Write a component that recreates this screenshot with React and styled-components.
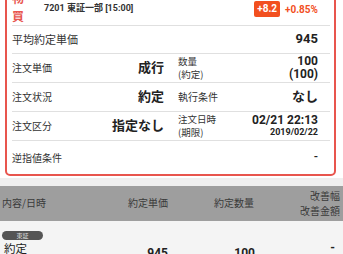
import React from 'react';
import styled, { createGlobalStyle } from 'styled-components';

const GlobalStyle = createGlobalStyle`
    html, body {
        margin: 0;
        padding: 0;
        background: #fff;
        overflow: hidden;
    }
    body {
        font-family: Roboto, "Noto Sans CJK JP", sans-serif;
        color: #333;
    }
`;

const Page = styled.div`
    width: 343px;
    height: 254px;
    overflow: hidden;
    background: #f4f4f4;
`;

const CardArea = styled.div`
    background: #fff;
    padding: 0 7px 2px 5px;
    margin-top: -14px;
`;

const Card = styled.div`
    border: 2px solid #e8554e;
    border-radius: 5px;
    padding: 0 4px 0 5px;
    background: #fff;
`;

const Head = styled.div`
    display: flex;
    align-items: flex-start;
    height: 37px;
    border-bottom: 1px solid #e0e0e0;
`;

const Side = styled.div`
    color: #e8554e;
    font-size: 12px;
    font-weight: 700;
    line-height: 18px;
    width: 32px;
    padding-top: 1px;
    font-family: "Noto Sans CJK JP", sans-serif;
`;

const Code = styled.div`
    font-size: 9px;
    font-weight: 700;
    padding-top: 13px;
    color: #333;
    flex: 1;
`;

const Change = styled.div`
    display: flex;
    align-items: center;
    gap: 5px;
    padding-top: 13px;
    margin-right: 12px;
`;

const Badge = styled.span`
    background: #f2501f;
    color: #fff;
    font-weight: 700;
    font-size: 10px;
    border-radius: 2px;
    padding: 2px 3px;
    line-height: 12px;
`;

const Pct = styled.span`
    color: #f2501f;
    font-weight: 700;
    font-size: 10px;
`;

const Row = styled.div`
    display: flex;
    align-items: center;
    height: ${p => p.$h}px;
    border-bottom: ${p => (p.$last ? 'none' : '1px solid #e0e0e0')};
`;

const Half = styled.div`
    display: flex;
    align-items: center;
    flex: ${p => (p.$left ? '0 0 159px' : '1')};
    padding-left: ${p => (p.$left ? 0 : 7)}px;
    height: 100%;
`;

const Label = styled.div`
    font-size: ${p => p.$size || 10}px;
    line-height: 1.35;
    color: #333;
    flex: 1;
    font-family: "Noto Sans CJK JP", sans-serif;
`;

const Value = styled.div`
    font-size: ${p => p.$size || 13}px;
    font-weight: 700;
    text-align: right;
    line-height: 1.1;
    color: #222;
    margin-right: ${p => p.$mr || 0}px;
`;

const Sub = styled.div`
    font-size: 9px;
    font-weight: 700;
`;

const Gap = styled.div`
    height: 8px;
    background: #efefef;
`;

// columns: content/date, price, quantity, improvement
const columns = '1fr 68px 131px 41px';

const TableHead = styled.div`
    display: grid;
    grid-template-columns: ${columns};
    align-items: center;
    height: 35px;
    background: #9e9e9e;
    color: #3a3a3a;
    font-size: 10px;
    padding: 0 3px 0 2px;
    font-family: "Noto Sans CJK JP", sans-serif;
`;

const Th = styled.div`
    text-align: ${p => p.$align || 'left'};
    padding-right: ${p => p.$pr || 0}px;
    line-height: 1.45;
    white-space: nowrap;
`;

const TableRow = styled.div`
    display: grid;
    grid-template-columns: ${columns};
    background: #f4f4f4;
    padding: 10px 3px 0 2px;
    height: 40px;
`;

const Market = styled.span`
    display: block;
    background: #555;
    color: #ddd;
    font-size: 6px;
    border-radius: 5px;
    width: 41px;
    height: 9px;
    line-height: 9px;
    text-align: center;
    font-family: "Noto Sans CJK JP", sans-serif;
`;

const Kind = styled.div`
    font-size: 11.5px;
    line-height: 14px;
    color: #222;
    margin: 1px 0 0 2px;
    font-family: "Noto Sans CJK JP", sans-serif;
`;

const Td = styled.div`
    text-align: ${p => p.$align || 'left'};
    font-weight: 700;
    font-size: 12px;
    line-height: 14px;
    padding: ${p => p.$pt || 0}px ${p => p.$pr || 0}px 0 0;
    color: #222;
`;

export default function App() {
    return (
        <Page>
            <GlobalStyle />
            <CardArea>
                <Card>
                    <Head>
                        <Side>物<br />買</Side>
                        <Code>7201 東証一部 [15:00]</Code>
                        <Change>
                            <Badge>+8.2</Badge>
                            <Pct>+0.85%</Pct>
                        </Change>
                    </Head>
                    <Row $h={27}>
                        <Label $size={11}>平均約定単価</Label>
                        <Value $mr={12}>945</Value>
                    </Row>
                    <Row $h={28}>
                        <Half $left>
                            <Label>注文単価</Label>
                            <Value $mr={7}>成行</Value>
                        </Half>
                        <Half>
                            <Label $size={9.5}>数量<br />(約定)</Label>
                            <Value $size={12} $mr={12}>100<br />(100)</Value>
                        </Half>
                    </Row>
                    <Row $h={28}>
                        <Half $left>
                            <Label>注文状況</Label>
                            <Value $mr={7}>約定</Value>
                        </Half>
                        <Half>
                            <Label>執行条件</Label>
                            <Value $mr={12}>なし</Value>
                        </Half>
                    </Row>
                    <Row $h={28}>
                        <Half $left>
                            <Label>注文区分</Label>
                            <Value $mr={7}>指定なし</Value>
                        </Half>
                        <Half>
                            <Label $size={9.5}>注文日時<br />(期限)</Label>
                            <Value $size={12} $mr={12}>02/21 22:13<Sub>2019/02/22</Sub></Value>
                        </Half>
                    </Row>
                    <Row $h={33} $last>
                        <Label>逆指値条件</Label>
                        <Value $size={11} $mr={12}>-</Value>
                    </Row>
                </Card>
            </CardArea>
            <Gap />
            <TableHead>
                <Th>内容/日時</Th>
                <Th $align="right">約定単価</Th>
                <Th $align="right" $pr={45}>約定数量</Th>
                <Th $align="right">改善幅<br />改善金額</Th>
            </TableHead>
            <TableRow>
                <div>
                    <Market>東証</Market>
                    <Kind>約定</Kind>
                </div>
                <Td $align="right" $pt={15}>945</Td>
                <Td $align="right" $pt={15} $pr={44}>100</Td>
                <Td $align="right" $pt={10} $pr={5}>-</Td>
            </TableRow>
        </Page>
    );
}
